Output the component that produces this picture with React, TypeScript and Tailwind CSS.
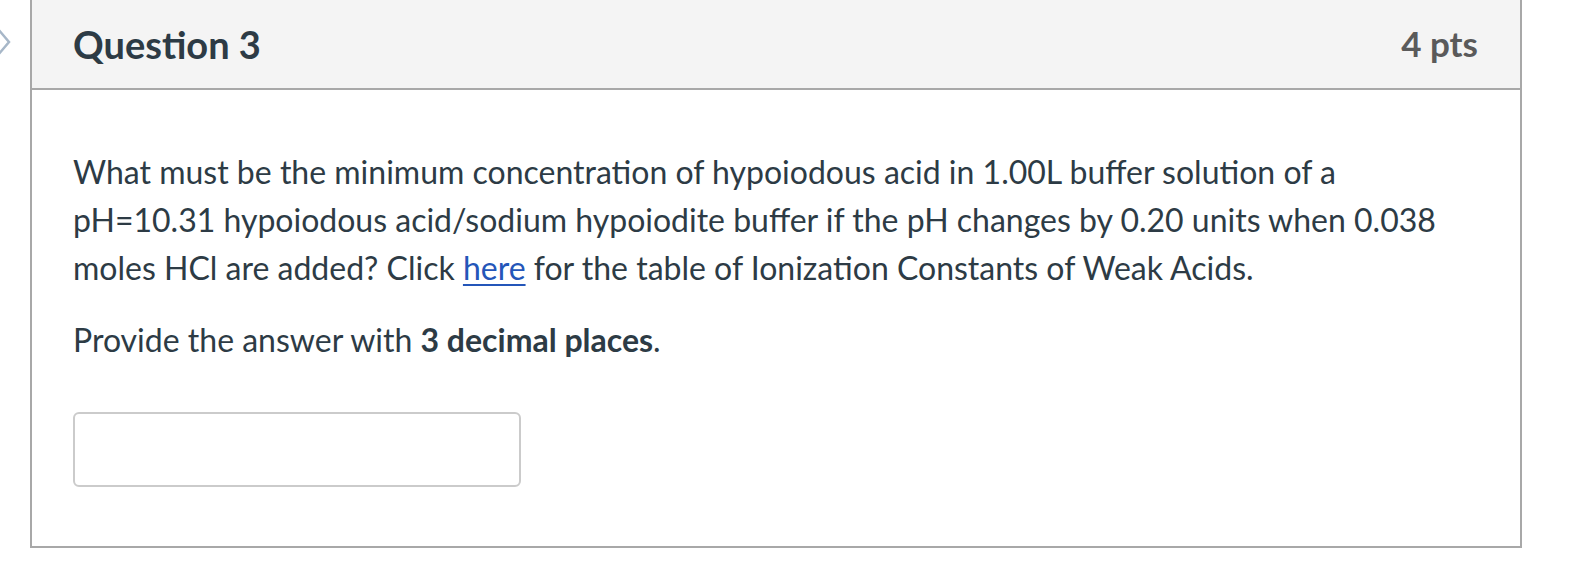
import React from 'react'

// Quiz question card: grey header with title + points, prompt text and an answer box.
export default function App(): React.ReactElement {
  return (
    <div className="relative w-[1590px] h-[564px] bg-white overflow-hidden" style={{ fontFamily: 'Lato, "Open Sans", sans-serif' }}>
      {/* collapse chevron peeking in from the left */}
      <svg className="absolute left-[-7px] top-[27px]" width="20" height="30" viewBox="0 0 20 30">
        <path d="M5 2 L16 15 L5 28" fill="none" stroke="#a7b7c8" strokeWidth="2.5" />
      </svg>

      <div className="ml-[30px] w-[1492px] h-[550px] -mt-[2px] border-2 border-[#a8a8a8] flex flex-col">
        <div className="h-[90px] shrink-0 bg-[#f4f4f4] border-b-2 border-[#a8a8a8] flex items-center justify-between pl-[41px] pr-[42px] pb-[1px]">
          <h2 className="text-[38px] font-bold text-[#2d3b45] leading-none">Question 3</h2>
          <span className="text-[35px] font-bold text-[#5a5a5a] leading-none">4 pts</span>
        </div>

        <div className="flex-1 pl-[41px] pr-[40px] pt-[58px] text-[32px] leading-[48px] text-[#2d3b45]">
          <p className="whitespace-nowrap">
            What must be the minimum concentration of hypoiodous acid in 1.00L buffer solution of a
            <br />
            pH=10.31 hypoiodous acid/sodium hypoiodite buffer if the pH changes by 0.20 units when 0.038
            <br />
            moles HCl are added? Click{' '}
            <a href="#" className="text-[#2456b9] underline underline-offset-[4px] decoration-2">here</a>{' '}
            for the table of Ionization Constants of Weak Acids.
          </p>
          <p className="mt-[24px]">
            Provide the answer with <strong className="font-bold">3 decimal places</strong>.
          </p>
          <div className="mt-[48px] w-[448px] h-[75px] rounded-[6px] border-2 border-[#cbcbcb] bg-white" />
        </div>
      </div>
    </div>
  )
}
